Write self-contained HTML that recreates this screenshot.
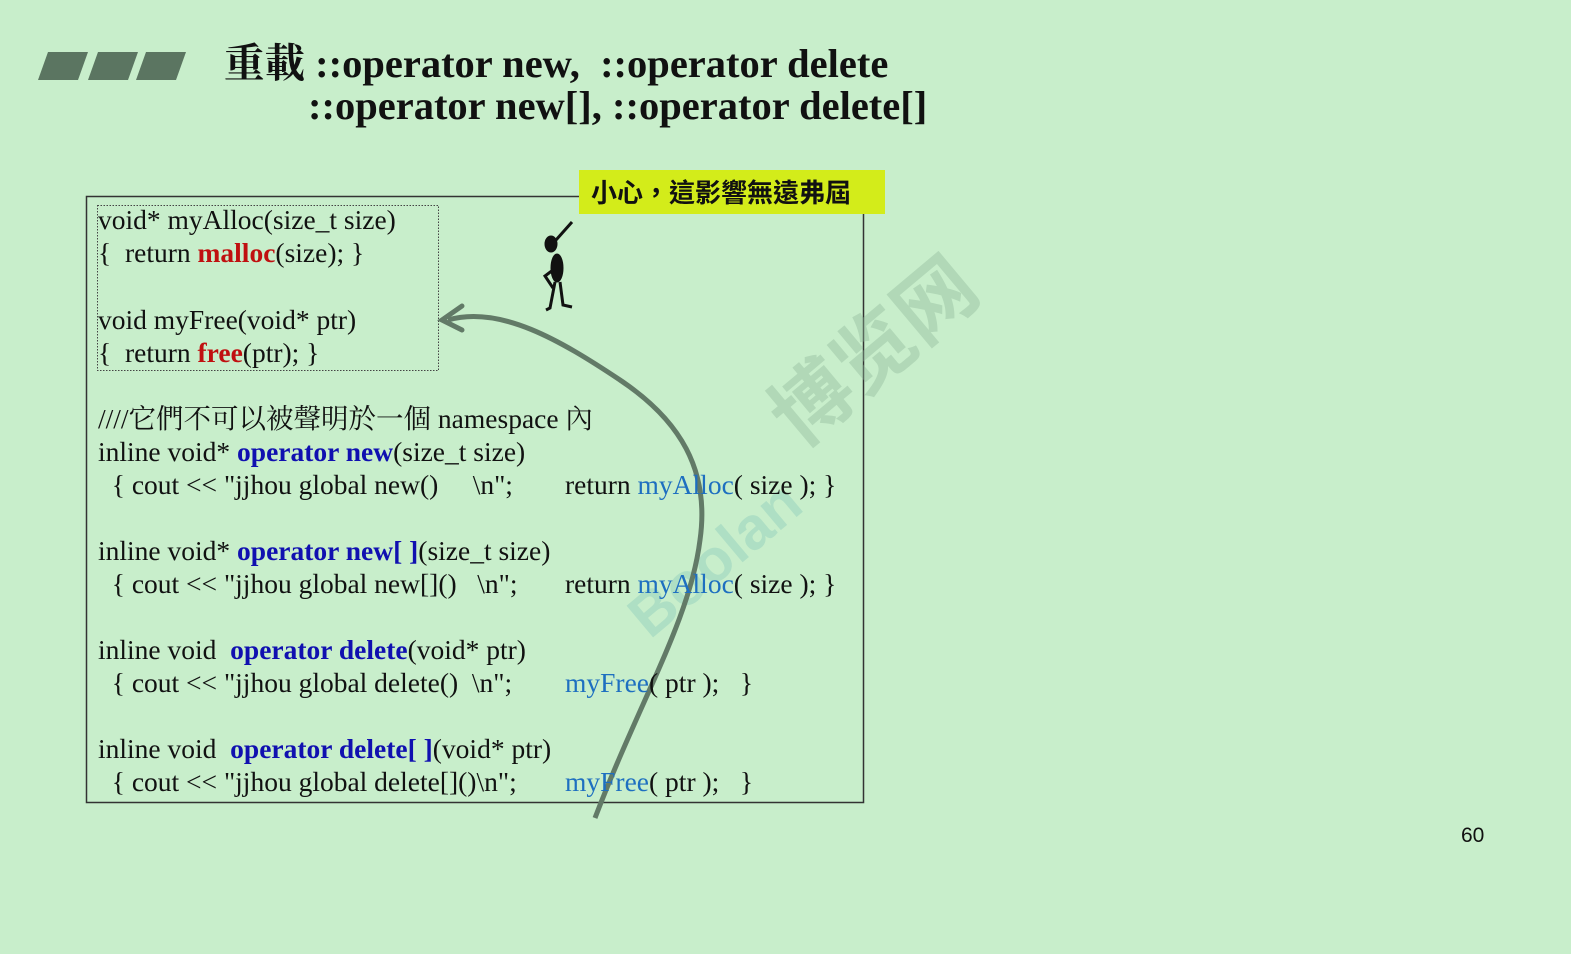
<!DOCTYPE html>
<html><head><meta charset="utf-8"><style>
body{margin:0;width:1571px;height:954px;background:#c8eecb;position:relative;overflow:hidden;font-family:"Liberation Serif","Noto Serif CJK SC",serif;}
.t{position:absolute;font-weight:bold;font-size:40.5px;color:#111;white-space:nowrap;}
.l{position:absolute;font-size:27.5px;color:#111;white-space:pre;line-height:30px;}
.b{color:#1010b0;font-weight:bold}
.r{color:#c01010;font-weight:bold}
.c{color:#1e6fc0}
.k{font-family:"Liberation Sans","Noto Sans CJK TC",sans-serif;}
</style></head><body>
<svg style="position:absolute;left:0;top:0" width="1571" height="954">
<polygon points="48,52 88,52 78,80 38,80" fill="#5b7561"/>
<polygon points="98,52 138,52 128,80 88,80" fill="#5b7561"/>
<polygon points="146,52 186,52 176,80 136,80" fill="#5b7561"/>
<rect x="86.5" y="196.5" width="777" height="606" fill="none" stroke="#333" stroke-width="1.5"/>
<rect x="97.5" y="205.5" width="341" height="165" fill="none" stroke="#444" stroke-width="1" stroke-dasharray="1.5,1.5"/>
<text x="650" y="640" transform="rotate(-40 650 640)" font-family="Liberation Sans" font-weight="bold" font-size="60" fill="#7fc4b8" opacity="0.35">Boolan</text>
<text x="800" y="450" transform="rotate(-40 800 450)" font-family="Noto Sans CJK SC" font-weight="bold" font-size="80" fill="#8fb89a" opacity="0.4">博览网</text>
<path d="M595,818 C640,700 690,620 700,540 C710,470 680,420 620,380 C560,340 500,305 448,320" fill="none" stroke="#627a67" stroke-width="5"/>
<path d="M462,306 L442,320 L462,330" fill="none" stroke="#627a67" stroke-width="5" stroke-linecap="round"/>
<g fill="#111" stroke="#111">
<ellipse cx="551" cy="244" rx="6" ry="8"/>
<path d="M556,240 L572,222" stroke-width="3"/>
<ellipse cx="557" cy="268" rx="6" ry="14"/>
<path d="M553,270 L545,276 L553,288 M555,282 L550,308 L546,310 M560,282 L563,305 L572,307" fill="none" stroke-width="3"/>
</g>
</svg>
<div class="t" style="left:224px;top:30px">重載 ::operator new,&nbsp; ::operator delete</div>
<div class="t" style="left:308px;top:82px">::operator new[], ::operator delete[]</div>
<div style="position:absolute;left:579px;top:170px;width:306px;height:44px;background:#d3ec1a"></div>
<div class="l k" style="left:591px;top:178px;font-size:26px;font-weight:bold">小心，這影響無遠弗屆</div>
<div class="l" style="left:98px;top:205px">void* myAlloc(size_t size)</div>
<div class="l" style="left:98px;top:238px">{  return <span class="r">malloc</span>(size); }</div>
<div class="l" style="left:98px;top:305px">void myFree(void* ptr)</div>
<div class="l" style="left:98px;top:338px">{  return <span class="r">free</span>(ptr); }</div>
<div class="l" style="left:98px;top:404px">////它們不可以被聲明於一個 namespace 內</div>
<div class="l" style="left:98px;top:437px">inline void* <span class="b">operator new</span>(size_t size)</div>
<div class="l" style="left:98px;top:470px">  { cout &lt;&lt; "jjhou global new()     \n";</div>
<div class="l" style="left:565px;top:470px">return <span class="c">myAlloc</span>( size ); }</div>
<div class="l" style="left:98px;top:536px">inline void* <span class="b">operator new[ ]</span>(size_t size)</div>
<div class="l" style="left:98px;top:569px">  { cout &lt;&lt; "jjhou global new[]()   \n";</div>
<div class="l" style="left:565px;top:569px">return <span class="c">myAlloc</span>( size ); }</div>
<div class="l" style="left:98px;top:635px">inline void  <span class="b">operator delete</span>(void* ptr)</div>
<div class="l" style="left:98px;top:668px">  { cout &lt;&lt; "jjhou global delete()  \n";</div>
<div class="l" style="left:565px;top:668px"><span class="c">myFree</span>( ptr );   }</div>
<div class="l" style="left:98px;top:734px">inline void  <span class="b">operator delete[ ]</span>(void* ptr)</div>
<div class="l" style="left:98px;top:767px">  { cout &lt;&lt; "jjhou global delete[]()\n";</div>
<div class="l" style="left:565px;top:767px"><span class="c">myFree</span>( ptr );   }</div>
<div style="position:absolute;left:1461px;top:824px;font-family:'Liberation Sans',sans-serif;font-size:21px;color:#111">60</div>
</body></html>
